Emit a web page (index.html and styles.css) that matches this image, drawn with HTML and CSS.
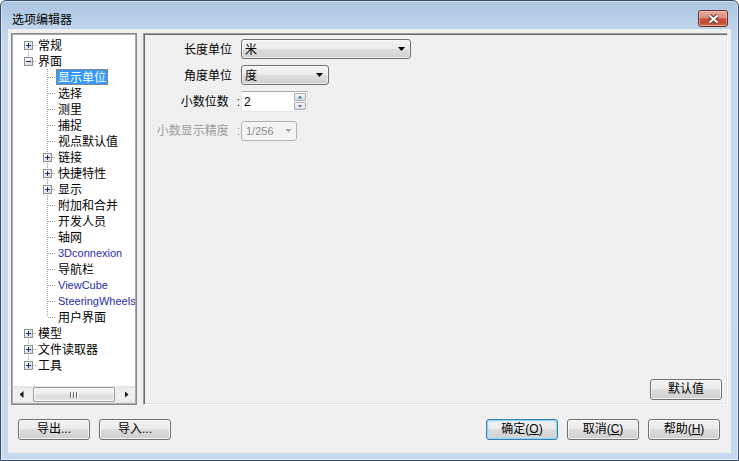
FILE: index.html
```html
<!DOCTYPE html>
<html lang="zh-CN">
<head>
<meta charset="utf-8">
<title>选项编辑器</title>
<link rel="stylesheet" href="styles.css">
</head>
<body>
<svg class="defs" width="0" height="0" aria-hidden="true">
  <defs>
    <linearGradient id="bxg" x1="0" y1="0" x2="1" y2="1">
      <stop offset="0" stop-color="#ffffff"/>
      <stop offset="1" stop-color="#d2d2d2"/>
    </linearGradient>
    <symbol id="plus" viewBox="0 0 9 9">
      <rect x="0.5" y="0.5" width="8" height="8" fill="url(#bxg)" stroke="#8e8f8f"/>
      <path d="M2 4.5h5M4.5 2v5" stroke="#1c3273" fill="none"/>
    </symbol>
    <symbol id="minus" viewBox="0 0 9 9">
      <rect x="0.5" y="0.5" width="8" height="8" fill="url(#bxg)" stroke="#8e8f8f"/>
      <path d="M2 4.5h5" stroke="#1c3273" fill="none"/>
    </symbol>
  </defs>
</svg>
<div class="window">
  <div class="titlebar">
    <span class="title">选项编辑器</span>
    <span class="close">
      <svg width="13" height="10" viewBox="0 0 13 10">
        <path d="M2.5 1.5l8 7M10.5 1.5l-8 7" stroke="#5e3530" stroke-width="4.2" fill="none"/>
        <path d="M2.5 1.5l8 7M10.5 1.5l-8 7" stroke="#ffffff" stroke-width="2.2" fill="none"/>
      </svg>
    </span>
  </div>
  <div class="frame">
    <div class="client">
      <div class="main">
        <div class="tree">
          <div class="tree-body">
            <div class="row l1"><span class="exp down"><svg width="9" height="9"><use href="#plus"/></svg></span><span class="hd w3"></span><span class="lbl">常规</span></div>
            <div class="row l1"><span class="exp"><svg width="9" height="9"><use href="#minus"/></svg></span><span class="hd w3"></span><span class="lbl">界面</span></div>
            <div class="children">
              <div class="row leaf"><span class="hd w8"></span><span class="lbl sel">显示单位</span></div>
              <div class="row leaf"><span class="hd w8"></span><span class="lbl">选择</span></div>
              <div class="row leaf"><span class="hd w8"></span><span class="lbl">测里</span></div>
              <div class="row leaf"><span class="hd w8"></span><span class="lbl">捕捉</span></div>
              <div class="row leaf"><span class="hd w8"></span><span class="lbl">视点默认值</span></div>
              <div class="row node"><span class="exp"><svg width="9" height="9"><use href="#plus"/></svg></span><span class="hd w4"></span><span class="lbl">链接</span></div>
              <div class="row node"><span class="exp"><svg width="9" height="9"><use href="#plus"/></svg></span><span class="hd w4"></span><span class="lbl">快捷特性</span></div>
              <div class="row node"><span class="exp"><svg width="9" height="9"><use href="#plus"/></svg></span><span class="hd w4"></span><span class="lbl">显示</span></div>
              <div class="row leaf"><span class="hd w8"></span><span class="lbl">附加和合并</span></div>
              <div class="row leaf"><span class="hd w8"></span><span class="lbl">开发人员</span></div>
              <div class="row leaf"><span class="hd w8"></span><span class="lbl">轴网</span></div>
              <div class="row leaf"><span class="hd w8"></span><span class="lbl lat">3Dconnexion</span></div>
              <div class="row leaf"><span class="hd w8"></span><span class="lbl">导航栏</span></div>
              <div class="row leaf"><span class="hd w8"></span><span class="lbl lat">ViewCube</span></div>
              <div class="row leaf"><span class="hd w8"></span><span class="lbl lat">SteeringWheels</span></div>
              <div class="row leaf"><span class="hd w8"></span><span class="lbl">用户界面</span></div>
            </div>
            <div class="row l1"><span class="exp down"><svg width="9" height="9"><use href="#plus"/></svg></span><span class="hd w3"></span><span class="lbl">模型</span></div>
            <div class="row l1"><span class="exp down"><svg width="9" height="9"><use href="#plus"/></svg></span><span class="hd w3"></span><span class="lbl">文件读取器</span></div>
            <div class="row l1"><span class="exp"><svg width="9" height="9"><use href="#plus"/></svg></span><span class="hd w3"></span><span class="lbl">工具</span></div>
          </div>
          <div class="hscroll">
            <span class="sarrow left"></span>
            <div class="track"><div class="thumb"><span class="grip"></span></div></div>
            <span class="sarrow right"></span>
          </div>
        </div>
        <div class="panel">
          <div class="form">
            <span class="lab np">长度单位</span>
            <div class="combo len"><span class="cval">米</span><i class="arr"></i></div>
            <span class="lab np">角度单位</span>
            <div class="combo ang"><span class="cval">度</span><i class="arr"></i></div>
            <span class="lab">小数位数<span class="colon">:</span></span>
            <div class="spin"><span class="spin-val">2</span><span class="spin-btns"><span class="sb up"></span><span class="sb dn"></span></span></div>
            <span class="lab dis">小数显示精度<span class="colon">:</span></span>
            <div class="combo dcombo"><span class="cval">1/256</span><i class="arr"></i></div>
          </div>
          <button class="btn defval">默认值</button>
        </div>
      </div>
      <div class="footer">
        <div class="group">
          <button class="btn">导出...</button>
          <button class="btn">导入...</button>
        </div>
        <div class="group">
          <button class="btn default">确定(<u>O</u>)</button>
          <button class="btn">取消(<u>C</u>)</button>
          <button class="btn">帮助(<u>H</u>)</button>
        </div>
      </div>
    </div>
  </div>
</div>
</body>
</html>
```

FILE: styles.css
```css
html, body {
  margin: 0;
  padding: 0;
  background: #ffffff;
}

body {
  font-family: "Liberation Sans", "Noto Sans CJK SC", sans-serif;
  font-size: 12px;
  color: #000;
}

.defs {
  display: block;
  width: 0;
  height: 0;
  overflow: hidden;
}

.window {
  width: 739px;
  height: 461px;
  box-sizing: border-box;
  border: 1px solid #3d4f66;
  border-radius: 6px 6px 0 0;
  background: linear-gradient(to bottom, #aac4e1 0px, #bcd2ea 22px, #c4d8ee 40px, #c6d9ee 100%);
  box-shadow: inset 0 0 0 1px rgba(255, 255, 255, 0.45);
  display: flex;
  flex-direction: column;
}

.titlebar {
  height: 28px;
  box-sizing: border-box;
  padding: 9px 10px 0 11px;
  display: flex;
  align-items: flex-start;
}

.title {
  font-family: "Noto Sans CJK SC", sans-serif;
  font-size: 12px;
  line-height: 16px;
  margin-top: 1px;
  color: #000;
}

.close {
  margin-left: auto;
  width: 30px;
  height: 17px;
  box-sizing: border-box;
  border: 1px solid #6e2c24;
  border-radius: 3px;
  background: linear-gradient(to bottom, #e9ab9e 0%, #dc8f7f 45%, #c8553d 52%, #c24a31 78%, #d3795c 100%);
  box-shadow: inset 0 0 0 1px rgba(255, 225, 215, 0.45);
  display: flex;
  align-items: center;
  justify-content: center;
}

.frame {
  flex: 1;
  display: flex;
  padding: 0 7px 7px 7px;
}

.client {
  flex: 1;
  background: #f0f0f0;
  display: flex;
  flex-direction: column;
}

.main {
  height: 372px;
  display: flex;
  gap: 6px;
  padding: 4px 3px 0 3px;
}

/* ---------- tree ---------- */
.tree {
  width: 126px;
  box-sizing: border-box;
  border: 1px solid #8a8a8a;
  box-shadow: inset 0 0 0 1px #ababab;
  padding: 1px;
  background: #fff;
  display: flex;
  flex-direction: column;
}

.tree-body {
  flex: 1;
  overflow: hidden;
  padding-top: 2px;
  font-family: "Noto Sans CJK SC", sans-serif;
}

.row {
  display: flex;
  align-items: center;
  height: 16px;
  white-space: nowrap;
}

.l1 { padding-left: 11px; }
.leaf { padding-left: 35px; }
.node { padding-left: 30px; }

.exp {
  position: relative;
  width: 9px;
  height: 9px;
  flex: none;
  display: block;
}

.exp svg {
  display: block;
}

.exp.down::after {
  content: "";
  position: absolute;
  left: 4px;
  top: 10px;
  width: 1px;
  height: 6px;
  background: repeating-linear-gradient(to bottom, #a0a0a0 0 1px, transparent 1px 2px);
}

.hd {
  height: 1px;
  flex: none;
  background: repeating-linear-gradient(to right, #a0a0a0 0 1px, transparent 1px 2px);
}

.w3 { width: 3px; }
.w4 { width: 4px; }
.w8 { width: 8px; }

.children {
  background-image: repeating-linear-gradient(to bottom, #a0a0a0 0 1px, transparent 1px 2px);
  background-repeat: no-repeat;
  background-position: 34px 0;
  background-size: 1px 248px;
}

.lbl {
  font-size: 12px;
  line-height: 14px;
  padding: 0 1px;
  border: 1px solid transparent;
  color: #000;
}

.lbl.sel {
  background: #3399ff;
  color: #fff;
  border: 1px dotted #c8772e;
}

.lbl.lat {
  font-family: "Liberation Sans", sans-serif;
  font-size: 11px;
  color: #1f2fa8;
}

.hscroll {
  height: 17px;
  flex: none;
  display: flex;
  background: linear-gradient(to bottom, #e3e3e3 0%, #efefef 25%, #f1f1f1 75%, #e6e6e6 100%);
}

.sarrow {
  width: 17px;
  flex: none;
  display: flex;
  align-items: center;
  justify-content: center;
}

.sarrow::before {
  content: "";
  width: 4px;
  height: 7px;
  background: #1a1a1a;
}

.sarrow.left::before {
  clip-path: polygon(100% 0, 100% 100%, 0 50%);
}

.sarrow.right::before {
  clip-path: polygon(0 0, 0 100%, 100% 50%);
}

.track {
  flex: 1;
  display: flex;
  padding: 1px 3px 0 3px;
}

.thumb {
  flex: 1;
  height: 15px;
  box-sizing: border-box;
  border: 1px solid #9a9a9a;
  border-radius: 2px;
  background: linear-gradient(to bottom, #f6f6f6 0%, #ececec 48%, #dcdcdc 52%, #e6e6e6 100%);
  box-shadow: inset 0 0 0 1px rgba(255, 255, 255, 0.7);
  display: flex;
  align-items: center;
  justify-content: center;
}

.grip {
  width: 8px;
  height: 6px;
  background: repeating-linear-gradient(to right, #6a6a6a 0 1px, #ffffff 1px 2px, transparent 2px 3px);
}

/* ---------- right panel ---------- */
.panel {
  flex: 1;
  box-sizing: border-box;
  border-style: solid;
  border-width: 1px;
  border-color: #a0a0a0 #ffffff #ffffff #a0a0a0;
  box-shadow: inset 1px 1px 0 #696969, inset -1px -1px 0 #e3e3e3;
  padding: 1px;
  display: flex;
  flex-direction: column;
}

.form {
  display: grid;
  grid-template-columns: 95px max-content;
  column-gap: 1px;
  row-gap: 6px;
  align-items: center;
  padding-top: 4px;
  font-family: "Noto Sans CJK SC", sans-serif;
}

.lab {
  justify-self: end;
  font-size: 12px;
  line-height: 20px;
  white-space: nowrap;
}

.lab.np {
  padding-right: 8px;
}

.lab .colon {
  font-family: "Liberation Sans", sans-serif;
  margin-left: 8px;
}

.lab.dis {
  color: #9d9d9d;
  margin-top: 2px;
}

.combo {
  height: 20px;
  box-sizing: border-box;
  border: 1px solid #707070;
  border-radius: 3px;
  background: linear-gradient(to bottom, #f3f3f3 0%, #ebebeb 50%, #dedede 50%, #d0d0d0 100%);
  box-shadow: inset 0 0 0 1px rgba(255, 255, 255, 0.6);
  display: flex;
  align-items: center;
  padding: 0 5px 0 3px;
}

.combo.len { width: 170px; }
.combo.ang { width: 88px; }

.cval {
  font-size: 12px;
  line-height: 16px;
}

.arr {
  margin-left: auto;
  width: 7px;
  height: 4px;
  background: #000;
  clip-path: polygon(0 0, 100% 0, 50% 100%);
}

.combo.dcombo {
  width: 56px;
  margin-top: 2px;
  border-color: #adb2b5;
  background: #f4f4f4;
  box-shadow: none;
  color: #8c8c8c;
  padding-right: 4px;
}

.combo.dcombo .cval {
  font-family: "Liberation Sans", sans-serif;
  font-size: 11px;
  padding-left: 1px;
}

.combo.dcombo .arr {
  background: #a6a6a6;
}

.spin {
  width: 67px;
  height: 21px;
  box-sizing: border-box;
  border: 1px solid;
  border-color: #abadb3 #dbdfe6 #e3e9ef #e2e3ea;
  background: #fff;
  display: flex;
  align-items: center;
}

.spin-val {
  font-family: "Liberation Sans", sans-serif;
  font-size: 12px;
  padding-left: 2px;
}

.spin-btns {
  margin-left: auto;
  margin-right: 1px;
  width: 12px;
  height: 17px;
  display: flex;
  flex-direction: column;
  gap: 1px;
}

.sb {
  flex: 1;
  box-sizing: border-box;
  border: 1px solid #a9a9a9;
  border-radius: 1px;
  background: linear-gradient(to bottom, #f7f7f7, #dedede);
  display: flex;
  align-items: center;
  justify-content: center;
}

.sb::before {
  content: "";
  width: 5px;
  height: 3px;
  background: #4f74ad;
}

.sb.up::before { clip-path: polygon(50% 0, 100% 100%, 0 100%); }
.sb.dn::before { clip-path: polygon(0 0, 100% 0, 50% 100%); }

/* ---------- buttons ---------- */
.btn {
  width: 72px;
  height: 21px;
  box-sizing: border-box;
  border: 1px solid #707070;
  border-radius: 3px;
  background: linear-gradient(to bottom, #f2f2f2 0%, #ebebeb 50%, #dddddd 50%, #cfcfcf 100%);
  box-shadow: inset 0 0 0 1px rgba(255, 255, 255, 0.75);
  font-family: "Liberation Sans", "Noto Sans CJK SC", sans-serif;
  font-size: 12px;
  line-height: 17px;
  color: #000;
  padding: 0;
  margin: 0;
}

.btn.default {
  border-color: #3c7fb1;
  box-shadow: inset 0 0 0 1px #8fd6f7, inset 0 0 0 2px rgba(190, 232, 250, 0.5);
}

.btn.defval {
  align-self: flex-end;
  margin: auto 4px 3px 0;
}

.footer {
  flex: 1;
  display: flex;
  justify-content: space-between;
  align-items: flex-start;
  padding: 14px 11px 0 10px;
}

.group {
  display: flex;
  gap: 9px;
}
```
